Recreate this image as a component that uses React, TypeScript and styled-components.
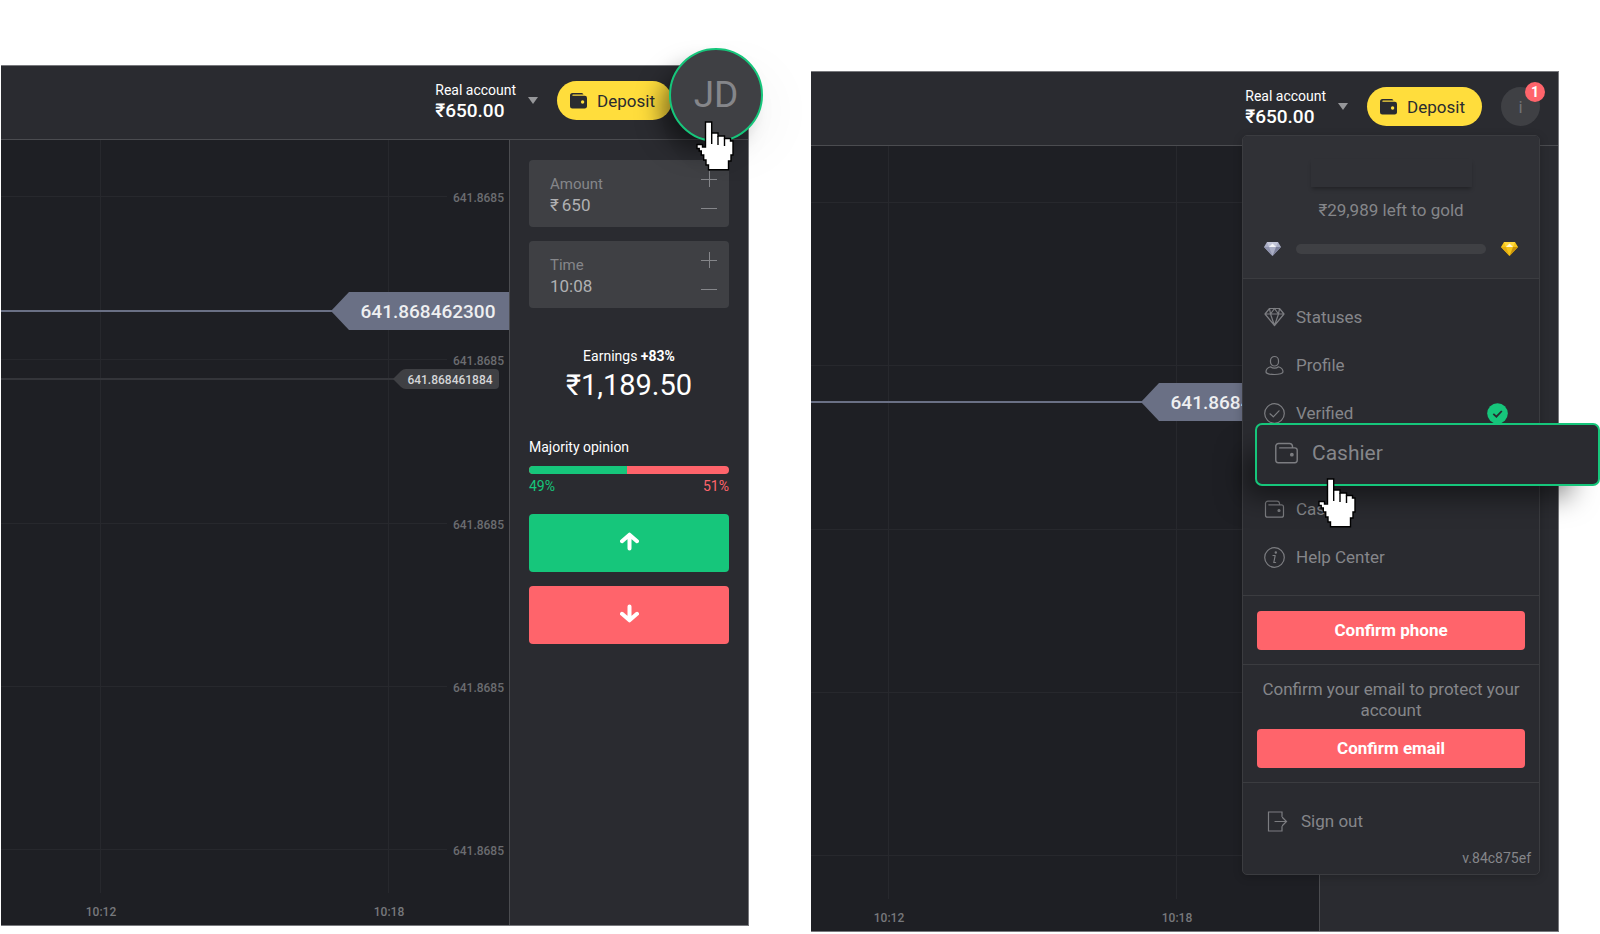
import React from "react";
import styled, { createGlobalStyle, css } from "styled-components";

const color = {
  chart: "#1e1f24",
  surface: "#2a2b30",
  raised: "#303136",
  control: "#3f4044",
  line: "#4b4c50",
  menuLine: "#3b3c40",
  grid: "#27282d",
  muted: "#85868a",
  green: "#16c67b",
  red: "#ff646b",
  yellow: "#ffdd3c",
  tag: "#6a7085",
};

const GlobalStyle = createGlobalStyle`
  *, *::before, *::after { box-sizing: border-box; }
  body {
    margin: 0;
    background: #fff;
    font-family: Roboto, "Liberation Sans", sans-serif;
    font-size: 17px;
    color: #fff;
    overflow-x: hidden;
  }
  button, input { font: inherit; color: inherit; }
  button { border: 0; padding: 0; background: none; cursor: pointer; }
  a { color: inherit; text-decoration: none; }
  ul, p { margin: 0; padding: 0; list-style: none; }
  svg { display: block; flex: none; }
`;

const Page = styled.main`
  display: grid;
  grid-template-columns: repeat(2, minmax(0, 1fr));
  column-gap: 62px;
  align-items: start;
  padding: 65px 41px 0 1px;
`;

const Screen = styled.section<{ $drop?: boolean }>`
  position: relative;
  margin-top: ${(p) => (p.$drop ? 6 : 0)}px;
  background: ${color.surface};
  border: solid #77787c;
  border-width: 1px 1px 1px 0;
`;

const Header = styled.header`
  display: flex;
  justify-content: flex-end;
  align-items: center;
  gap: 19px;
  padding: 15px 18px 19px;
  border-bottom: 1px solid ${color.line};
`;

const AccountButton = styled.button`
  display: flex;
  align-items: center;
  gap: 12px;
  height: 39px;
  text-align: left;
`;

const AccountName = styled.span`
  display: block;
  font-size: 14px;
  line-height: 20px;
`;

const AccountSum = styled.span`
  display: block;
  font-size: 19px;
  font-weight: 500;
  line-height: 22px;
`;

const DepositButton = styled.button`
  display: flex;
  align-items: center;
  gap: 10px;
  height: 39px;
  padding: 0 17px 0 13px;
  border-radius: 20px;
  background: ${color.yellow};
  color: #2a2b30;
`;

const AvatarSlot = styled.div`
  position: relative;
  width: 39px;
  height: 39px;
`;

const Avatar = styled.button`
  width: 39px;
  height: 39px;
  border-radius: 50%;
  background: ${color.control};
  color: #727377;
`;

const Badge = styled.span`
  position: absolute;
  top: -5px;
  right: -5px;
  width: 20px;
  border-radius: 10px;
  background: ${color.red};
  font-size: 14px;
  font-weight: 700;
  line-height: 20px;
  text-align: center;
`;

const BigAvatar = styled.button`
  position: absolute;
  z-index: 2;
  top: -33px;
  left: -22px;
  width: 94px;
  height: 94px;
  border: 2px solid ${color.green};
  border-radius: 50%;
  background: ${color.control};
  color: ${color.muted};
  font-size: 37px;
  line-height: 86px;
  box-shadow: -14px 14px 24px -6px rgba(0, 0, 0, 0.5), 16px 16px 50px rgba(0, 0, 0, 0.03);
`;

const Cursor = styled.svg<{ $x: number; $y: number }>`
  position: absolute;
  z-index: 3;
  left: ${(p) => p.$x}px;
  top: ${(p) => p.$y}px;
  pointer-events: none;
`;

const Body = styled.div`
  display: grid;
  grid-template-columns: minmax(0, 1fr) 239px;
`;

const ChartSvg = styled.svg`
  width: 100%;
  height: 785px;
  background: ${color.chart};
  font-size: 12px;
  font-weight: 500;
`;

const Aside = styled.aside`
  display: flex;
  flex-direction: column;
  padding: 20px 19px;
  border-left: 1px solid ${color.line};
`;

const FieldBox = styled.div`
  display: flex;
  justify-content: space-between;
  height: 67px;
  margin-bottom: 14px;
  padding: 4px 12px 4px 21px;
  border-radius: 4px;
  background: ${color.control};
`;

const FieldText = styled.div`
  display: flex;
  flex-direction: column;
  padding-top: 10px;
`;

const FieldLabel = styled.label`
  color: ${color.muted};
  font-size: 15px;
  line-height: 20px;
`;

const FieldValue = styled.div`
  display: flex;
  gap: 3px;
  color: #b0b1b3;
  line-height: 22px;
`;

const FieldInput = styled.input`
  width: 80px;
  height: 22px;
  padding: 0;
  border: 0;
  outline: 0;
  background: none;
`;

const Steppers = styled.div`
  display: flex;
  flex-direction: column;
`;

const Step = styled.button`
  display: flex;
  align-items: center;
  height: 29px;
  color: ${color.muted};
`;

const Earnings = styled.p`
  margin-top: 24px;
  font-size: 14px;
  line-height: 20px;
  text-align: center;
`;

const EarningsSum = styled.p`
  margin-top: 2px;
  font-size: 29px;
  line-height: 34px;
  text-align: center;
`;

const Majority = styled.p`
  margin: 35px 0 9px;
  font-size: 14px;
  line-height: 20px;
`;

const Ratio = styled.div`
  display: flex;
  height: 8px;
  border-radius: 4px;
  background: ${color.red};
  overflow: hidden;
`;

const RatioFill = styled.div`
  background: ${color.green};
`;

const Percents = styled.div`
  display: flex;
  justify-content: space-between;
  margin: 2px 0 18px;
  font-size: 14px;
  line-height: 20px;
`;

const Percent = styled.span<{ $up?: boolean }>`
  color: ${(p) => (p.$up ? color.green : color.red)};
`;

const TradeButton = styled.button<{ $up?: boolean }>`
  display: flex;
  align-items: center;
  justify-content: center;
  height: 58px;
  margin-bottom: 14px;
  padding-bottom: 4px;
  border-radius: 4px;
  background: ${(p) => (p.$up ? color.green : color.red)};
`;

const Menu = styled.nav`
  position: absolute;
  z-index: 1;
  top: 63px;
  right: 18px;
  width: 298px;
  border: 1px solid ${color.menuLine};
  border-radius: 5px;
  background: ${color.surface};
  color: ${color.muted};
  box-shadow: 0 2px 10px rgba(0, 0, 0, 0.2);
`;

const MenuPart = styled.div<{ $pad: string }>`
  padding: ${(p) => p.$pad};
  text-align: center;
  line-height: 21px;
  & + & { border-top: 1px solid ${color.menuLine}; }
`;

const StatusPart = styled(MenuPart)`
  border-radius: 4px 4px 0 0;
  background: ${color.raised};
`;

const UserName = styled.div`
  width: 161px;
  height: 28px;
  margin: 0 auto 13px;
  background: ${color.raised};
  box-shadow: 0 3px 4px -1px rgba(0, 0, 0, 0.3);
`;

const StatusRow = styled.div`
  display: flex;
  align-items: center;
  gap: 15px;
  margin-top: 21px;
`;

const Track = styled.div`
  flex: 1;
  height: 10px;
  border-radius: 5px;
  background: ${color.control};
`;

const rowStyle = css`
  display: flex;
  align-items: center;
  gap: 11px;
`;

const ItemSlot = styled.li`
  position: relative;
  height: 48px;
`;

const ItemLink = styled.a`
  ${rowStyle}
  height: 48px;
  padding-right: 11px;
`;

const ItemText = styled.span`
  flex: 1;
  text-align: left;
`;

const Spotlight = styled.a`
  ${rowStyle}
  gap: 13px;
  position: absolute;
  z-index: 2;
  top: -14px;
  left: -9px;
  right: -81px;
  height: 63px;
  padding: 0 17px 2px;
  border: 2px solid ${color.green};
  border-radius: 7px;
  background: ${color.surface};
  font-size: 21px;
  box-shadow: -20px 20px 28px -10px rgba(0, 0, 0, 0.5);
`;

const ConfirmButton = styled.button`
  display: block;
  width: 100%;
  height: 39px;
  border-radius: 4px;
  background: ${color.red};
  color: #fff;
  font-weight: 700;
`;

const Hint = styled.p`
  margin-bottom: 8px;
`;

const SignOut = styled.a`
  ${rowStyle}
  height: 48px;
  padding-left: 24px;
  gap: 13px;
`;

const Version = styled.p`
  padding-top: 3px;
  font-size: 14px;
  text-align: right;
`;

const HandCursor = ({ x, y }: { x: number; y: number }) => (
  <Cursor $x={x} $y={y} width="38" height="50" viewBox="0 0 38 50" stroke="#000" strokeWidth="1.400" aria-hidden>
    <path
      fill="#fff"
      d="M9.500 1H15.700V12H22V15H28.500V17.500H34.500V20H37V34H35V40H32.500V48.700H12.500V44H10V39H7.700V34H5.300V30H3.200V27.500H1V23.500H6.500V26H9.500Z"
    />
    <path d="M15.700 12V23M22 15V24M28.500 17.500V25" />
  </Cursor>
);

const WalletSolid = () => (
  <svg width="17" height="16" viewBox="0 0 17 16" fill="#2a2b30" aria-hidden>
    <path d="M2.500 0H11.500A2 2 0 0 1 13.500 1.500H3a.6.6 0 0 0 0 1.300h11.500A2.300 2.300 0 0 1 17 5v8.500A2.300 2.300 0 0 1 14.700 15.500H2.300A2.300 2.300 0 0 1 0 13.200V2.500A2.500 2.500 0 0 1 2.500 0Z" />
    <circle cx="12.600" cy="9" r="1.700" fill={color.yellow} />
  </svg>
);

const Icon = ({ size = 21, children }: { size?: number; children: React.ReactNode }) => (
  <svg width={size} height={size} viewBox="0 0 21 21" fill="none" stroke="#7c7d81" strokeWidth="1.200" strokeLinejoin="round" strokeLinecap="round" aria-hidden>
    {children}
  </svg>
);

const wallet = (
  <>
    <path d="M1.500 4v12.200a2 2 0 0 0 2 2h14a2 2 0 0 0 2-2V7.800a2 2 0 0 0-2-2H4.800M1.500 4.500a2.400 2.400 0 0 1 2.400-2.400H13a2.500 2.500 0 0 1 2.500 2v1.700" />
    <circle cx="15" cy="11.500" r="1" fill="#7c7d81" />
  </>
);
const diamond = (
  <path d="M5.500 1.500h10l4.500 5.500-9.500 11.500L1 7ZM1 7h19M6.500 7l4 11.500 4-11.500M6.500 7l4-5.500 4 5.500M5.500 1.500l1 5.500M15.500 1.500l-1 5.500" />
);
const person = (
  <>
    <rect x="6.500" y="1.500" width="8" height="9.500" rx="4" />
    <path d="M6.500 11.800C3.500 12.800 2 14.500 2 17c0 1.200 3.500 2.500 8.500 2.500S19 18.200 19 17c0-2.500-1.500-4.200-4.500-5.200-1.200 1-2.500 1.400-4 1.400s-2.800-.4-4-1.400Z" />
  </>
);
const verified = (
  <>
    <circle cx="10.500" cy="10.500" r="9.800" />
    <path d="m6 10.800 3.300 3 5.700-6" />
  </>
);
const info = (
  <>
    <circle cx="10.500" cy="10.500" r="9.800" />
    <path d="M9 8.500h2.200L9.800 15.500h1.800" />
    <circle cx="11.800" cy="5.500" r=".6" fill="#7c7d81" />
  </>
);
const exit = <path d="M15 5.500V1H1.500v19H15v-4.500M8 10.500h11.500M15.500 6.500l4 4-4 4" strokeLinejoin="miter" />;

const CheckBadge = () => (
  <svg width="21" height="21" viewBox="0 0 21 21" aria-hidden>
    <circle cx="10.500" cy="10.500" r="10.300" fill={color.green} />
    <path d="m6.300 10.800 3.100 2.900 5.400-5.700" fill="none" stroke="#2a2b30" strokeWidth="1.800" />
  </svg>
);

const Gem = ({ shades }: { shades: string[] }) => (
  <svg width="17" height="14" viewBox="0 0 17 14" aria-hidden>
    <path d="M3 0h11l3 5-8.500 9L0 5Z" fill={shades[0]} />
    <path d="M0 5h5l3.500 9Z" fill={shades[1]} />
    <path d="M17 5h-5l-3.500 9Z" fill={shades[2]} />
    <path d="M3 0h11l-2 5H5Z" fill={shades[3]} />
    <path d="M8.500 1.500 12 5H5Z" fill="#fff" opacity=".8" />
  </svg>
);

const Arrow = ({ down }: { down?: boolean }) => (
  <svg width="19" height="19" viewBox="0 0 19 19" fill="none" stroke="#fff" strokeWidth="4" strokeLinecap="round" strokeLinejoin="round" aria-hidden>
    <path d={down ? "M9.500 2.500v13M2 9.800l7.500 6.500L17 9.800" : "M9.500 16.500v-13M2 9.200l7.500-6.500L17 9.200"} />
  </svg>
);

const GRID_ROWS = [56, 219, 383, 546, 709];
const TIMES: [string, number][] = [
  ["10:12", -408],
  ["10:18", -120],
];

const Chart = ({ shift, price, last, scale }: { shift: number; price: number; last?: number; scale?: boolean }) => (
  <ChartSvg role="img" aria-label="Price chart">
    <svg x="100%" overflow="visible">
      {GRID_ROWS.map((y) => (
        <g key={y}>
          <path d={`M-2000 ${y}.500H-62`} stroke={color.grid} />
          {scale && <text x="-5" y={y + 6} textAnchor="end" fill="#6b6c70">641.8685</text>}
        </g>
      ))}
      {TIMES.map(([label, x]) => (
        <g key={label}>
          <path d={`M${x - shift}.500 0V753`} stroke={color.grid} />
          <text x={x - shift} y="776" textAnchor="middle" fill="#77787c">{label}</text>
        </g>
      ))}
      <path d={`M-2000 ${price}H-176`} stroke={color.tag} strokeWidth="2" />
      <path d={`M-178 ${price}l18-19H0v38H-160Z`} fill={color.tag} />
      <text x="-81" y={price + 7} textAnchor="middle" fill="#eeeff1" fontSize="19">641.868462300</text>
      {last && (
        <>
          <path d={`M-2000 ${last}H-114`} stroke="#34353a" strokeWidth="2" />
          <path d={`M-116 ${last}l8-8q2-2 5-2h89q4 0 4 4v12q0 4-4 4h-89q-3 0-5-2Z`} fill={color.control} />
          <text x="-59" y={last + 5} textAnchor="middle" fill="#d4d5d7">641.868461884</text>
        </>
      )}
    </svg>
  </ChartSvg>
);

const Account = () => (
  <>
    <AccountButton aria-haspopup="menu">
      <span>
        <AccountName>Real account</AccountName>
        <AccountSum>₹650.00</AccountSum>
      </span>
      <svg width="10" height="7" viewBox="0 0 10 7" fill="#96979a" aria-hidden>
        <path d="M0 0h10L5 7Z" />
      </svg>
    </AccountButton>
    <DepositButton>
      <WalletSolid />
      Deposit
    </DepositButton>
  </>
);

const Field = ({ id, label, prefix, value }: { id: string; label: string; prefix?: string; value: string }) => (
  <FieldBox>
    <FieldText>
      <FieldLabel htmlFor={id}>{label}</FieldLabel>
      <FieldValue>
        {prefix && <span>{prefix}</span>}
        <FieldInput id={id} defaultValue={value} />
      </FieldValue>
    </FieldText>
    <Steppers>
      <Step aria-label={`Increase ${label}`}>
        <svg width="16" height="16" viewBox="0 0 16 16" stroke="currentColor" aria-hidden>
          <path d="M0 8.500h16M8.500 0v16" />
        </svg>
      </Step>
      <Step aria-label={`Decrease ${label}`}>
        <svg width="16" height="16" viewBox="0 0 16 16" stroke="currentColor" aria-hidden>
          <path d="M0 8.500h16" />
        </svg>
      </Step>
    </Steppers>
  </FieldBox>
);

const Item = ({ icon, label, done }: { icon: React.ReactNode; label: string; done?: boolean }) => (
  <ItemSlot>
    <ItemLink href="#">
      <Icon>{icon}</Icon>
      <ItemText>{label}</ItemText>
      {done && <CheckBadge />}
    </ItemLink>
  </ItemSlot>
);

export default function App() {
  const up = 49;
  return (
    <>
      <GlobalStyle />
      <Page>
        <Screen>
          <Header>
            <Account />
            <AvatarSlot>
              <BigAvatar>JD</BigAvatar>
              <HandCursor x={5} y={40} />
            </AvatarSlot>
          </Header>
          <Body>
            <Chart shift={0} price={171} last={239} scale />
            <Aside>
              <Field id="amount" label="Amount" prefix="₹" value="650" />
              <Field id="time" label="Time" value="10:08" />
              <Earnings>
                Earnings <b>+83%</b>
              </Earnings>
              <EarningsSum>₹1,189.50</EarningsSum>
              <Majority>Majority opinion</Majority>
              <Ratio>
                <RatioFill style={{ width: `${up}%` }} />
              </Ratio>
              <Percents>
                <Percent $up>{up}%</Percent>
                <Percent>{100 - up}%</Percent>
              </Percents>
              <TradeButton $up aria-label="Up">
                <Arrow />
              </TradeButton>
              <TradeButton aria-label="Down">
                <Arrow down />
              </TradeButton>
            </Aside>
          </Body>
        </Screen>

        <Screen $drop>
          <Header>
            <Account />
            <AvatarSlot>
              <Avatar>i</Avatar>
              <Badge>1</Badge>
            </AvatarSlot>
          </Header>
          <Body>
            <Chart shift={22} price={256} />
            <Aside />
          </Body>
          <Menu>
            <StatusPart $pad="23px 21px 22px">
              <UserName />
              <p>₹29,989 left to gold</p>
              <StatusRow>
                <Gem shades={["#a9adc4", "#8f93ad", "#7b7f99", "#c3c6d8"]} />
                <Track role="progressbar" aria-label="Progress to gold" aria-valuenow={0} />
                <Gem shades={["#f5c518", "#e3ac10", "#c8920a", "#ffd83c"]} />
              </StatusRow>
            </StatusPart>
            <MenuPart $pad="14px 20px 14px 21px" as="ul">
              <Item icon={diamond} label="Statuses" />
              <Item icon={person} label="Profile" />
              <Item icon={verified} label="Verified" done />
              <ItemSlot>
                <Spotlight href="#">
                  <Icon size={25}>{wallet}</Icon>
                  Cashier
                </Spotlight>
                <HandCursor x={54} y={41} />
              </ItemSlot>
              <Item icon={wallet} label="Cashier" />
              <Item icon={info} label="Help Center" />
            </MenuPart>
            <MenuPart $pad="15px 14px 14px">
              <ConfirmButton>Confirm phone</ConfirmButton>
            </MenuPart>
            <MenuPart $pad="14px">
              <Hint>Confirm your email to protect your account</Hint>
              <ConfirmButton>Confirm email</ConfirmButton>
            </MenuPart>
            <MenuPart $pad="14px 8px 5px 0">
              <SignOut href="#">
                <Icon>{exit}</Icon>
                Sign out
              </SignOut>
              <Version>v.84c875ef</Version>
            </MenuPart>
          </Menu>
        </Screen>
      </Page>
    </>
  );
}
